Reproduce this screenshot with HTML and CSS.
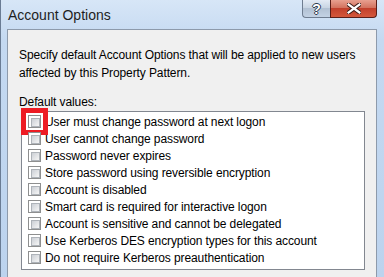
FILE: index.html
```html
<!DOCTYPE html>
<html lang="en">
<head>
    <meta charset="UTF-8">
    <title>Account Options</title>
    <link rel="stylesheet" href="styles.css">
</head>
<body>

    <div class="window">
        <div class="titlebar">
            <span class="title">Account Options</span>
            <div class="caption-buttons">
                <span class="cap-btn help">?</span>
                <span class="cap-btn close">
                    <svg width="14" height="11" viewBox="0 0 14 11">
                        <path d="M1.5 1.5 L12.5 9.5 M12.5 1.5 L1.5 9.5" stroke="#3b1a16" stroke-width="4.2" stroke-linecap="square"/>
                        <path d="M1.5 1.5 L12.5 9.5 M12.5 1.5 L1.5 9.5" stroke="#ffffff" stroke-width="2.2" stroke-linecap="square"/>
                    </svg>
                </span>
            </div>
        </div>

        <div class="client">
            <p class="intro">Specify default Account Options that will be applied to new users<br>affected by this Property Pattern.</p>
            <div class="label">Default values:</div>
            <ul class="options">
                <li class="marked"><span class="check"></span>User must change password at next logon</li>
                <li><span class="check"></span>User cannot change password</li>
                <li><span class="check"></span>Password never expires</li>
                <li><span class="check"></span>Store password using reversible encryption</li>
                <li><span class="check"></span>Account is disabled</li>
                <li><span class="check"></span>Smart card is required for interactive logon</li>
                <li><span class="check"></span>Account is sensitive and cannot be delegated</li>
                <li><span class="check"></span>Use Kerberos DES encryption types for this account</li>
                <li><span class="check"></span>Do not require Kerberos preauthentication</li>
            </ul>
        </div>
    </div>

</body>
</html>
```

FILE: styles.css
```css
body {
    margin: 0;
    font-family: "Liberation Sans", Arial, sans-serif;
    font-size: 12px;
    letter-spacing: -0.1px;
    color: #000;
    background: #c6daf2;
    overflow: hidden;
}
.window {
    width: 384px;
    height: 277px;
    box-sizing: border-box;
    border-left: 1px solid #6a7c94;
    background: linear-gradient(#d7e6f7, #c4d9f1 40px, #bcd3ee);
    overflow: hidden;
}
.titlebar {
    height: 29px;
    display: flex;
    justify-content: space-between;
    align-items: flex-start;
}
.title {
    font-size: 14px;
    letter-spacing: 0;
    padding: 7px 0 0 7px;
    color: #1e1e1e;
}
.caption-buttons {
    display: flex;
    margin-right: 7px;
}
.cap-btn {
    height: 18px;
    display: flex;
    align-items: center;
    justify-content: center;
    box-sizing: border-box;
    border: 1px solid #6f7d90;
    border-top: none;
}
.help {
    width: 28px;
    border-right: none;
    border-bottom-left-radius: 4px;
    background: linear-gradient(#e3ebf5, #c9d5e3 45%, #b2c1d3 50%, #c3d2e4);
    color: #fff;
    font-weight: bold;
    font-size: 14px;
    text-shadow: 1px 0 0 #2e3b4c, -1px 0 0 #2e3b4c, 0 1px 0 #2e3b4c, 0 -1px 0 #2e3b4c;
}
.close {
    width: 47px;
    border-bottom-right-radius: 4px;
    border-color: #5a1e18;
    background: linear-gradient(#e8a090, #d3735f 45%, #c2402c 50%, #d4583c);
}
.client {
    margin: 0 7px 0 6px;
    height: 248px;
    background: #f0f0f0;
    border: 1px solid #8d9aab;
    border-bottom: none;
    padding: 16px 11px 0 11px;
    box-sizing: border-box;
}
.intro {
    margin: 0;
    line-height: 18px;
}
.label {
    margin-top: 11px;
    line-height: 18px;
}
.options {
    list-style: none;
    margin: 0 0 0 2px;
    padding: 1px 0 3px 0;
    background: #fff;
    border: 1px solid #828790;
    width: 344px;
    box-sizing: border-box;
}
.options li {
    height: 17px;
    display: flex;
    align-items: center;
    padding-left: 6px;
}
.check {
    width: 13px;
    height: 13px;
    box-sizing: border-box;
    border: 1px solid #8e8f8f;
    background: #fff;
    padding: 2px;
    margin-right: 4px;
    position: relative;
}
.check::after {
    content: "";
    display: block;
    width: 7px;
    height: 7px;
    border: 1px solid #aeb3b9;
    background: linear-gradient(135deg, #cbcfd5, #f6f6f6);
}
.marked .check::before {
    content: "";
    position: absolute;
    left: -8px;
    top: -8px;
    width: 17px;
    height: 17px;
    border: 5px solid #ed1c24;
}
```
